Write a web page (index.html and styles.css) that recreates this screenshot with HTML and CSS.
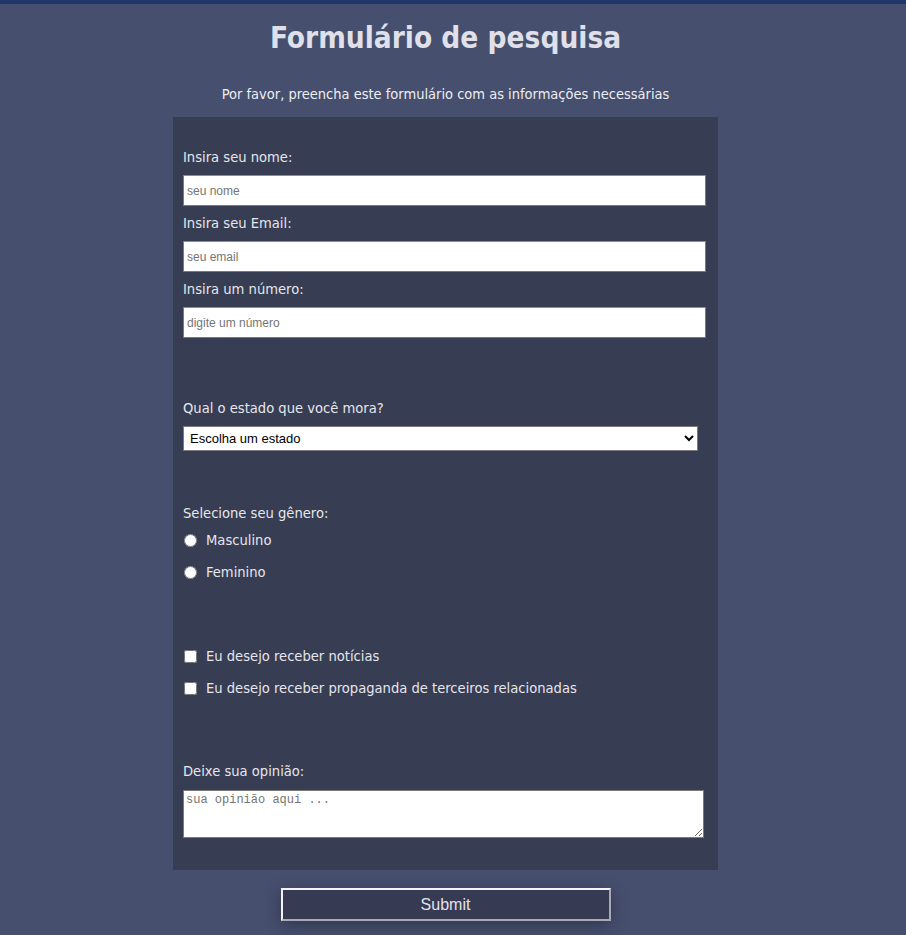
FILE: index.html
```html
<!DOCTYPE html>
<html lang="pt-BR">
<head>
<meta charset="utf-8">
<title>Formulário de pesquisa</title>
<link rel="stylesheet" href="styles.css">
</head>
<body>
<div class="page">
  <h1 class="title">Formulário de pesquisa</h1>
  <p class="subtitle">Por favor, preencha este formulário com as informações necessárias</p>
  <form class="panel">
    <div class="field">
      <label class="label" for="nome">Insira seu nome:</label>
      <input class="text-input" id="nome" type="text" placeholder="seu nome">
    </div>
    <div class="field">
      <label class="label" for="email">Insira seu Email:</label>
      <input class="text-input" id="email" type="email" placeholder="seu email">
    </div>
    <div class="field">
      <label class="label" for="numero">Insira um número:</label>
      <input class="text-input" id="numero" type="number" placeholder="digite um número">
    </div>

    <div class="field section-state">
      <label class="label" for="estado">Qual o estado que você mora?</label>
      <select class="select" id="estado">
        <option>Escolha um estado</option>
      </select>
    </div>

    <div class="field section-gender">
      <span class="label">Selecione seu gênero:</span>
      <div class="choices">
        <label class="choice"><input type="radio" name="genero" class="radio"><span>Masculino</span></label>
        <label class="choice"><input type="radio" name="genero" class="radio"><span>Feminino</span></label>
      </div>
    </div>

    <div class="choices section-checks">
      <label class="choice"><input type="checkbox" class="check"><span>Eu desejo receber notícias</span></label>
      <label class="choice"><input type="checkbox" class="check"><span>Eu desejo receber propaganda de terceiros relacionadas</span></label>
    </div>

    <div class="field section-opinion">
      <label class="label" for="opiniao">Deixe sua opinião:</label>
      <textarea class="textarea" id="opiniao" placeholder="sua opinião aqui ..."></textarea>
    </div>
  </form>
  <div class="actions">
    <button class="submit" type="submit">Submit</button>
  </div>
</div>
</body>
</html>
```

FILE: styles.css
```css
html, body {
  margin: 0;
  padding: 0;
}

body {
  background: #474f6e;
  border-top: 4px solid #1e3768;
  font-family: "DejaVu Sans Condensed", "DejaVu Sans", sans-serif;
  color: #e4e4ea;
  min-height: 931px;
}

.page {
  width: 891px;
  display: flex;
  flex-direction: column;
  align-items: center;
}

.title {
  margin: 16px 0 0;
  font-size: 29.5px;
  line-height: 36px;
  font-weight: bold;
  color: #dfe0ea;
  text-align: center;
}

.subtitle {
  margin: 29px 0 0;
  font-size: 14.5px;
  line-height: 18px;
  color: #eceef2;
  text-align: center;
}

.panel {
  margin-top: 14px;
  width: 545px;
  box-sizing: border-box;
  background: #373d53;
  padding: 31px 10px 32px;
  display: flex;
  flex-direction: column;
}

.field {
  display: flex;
  flex-direction: column;
  align-items: flex-start;
  margin-bottom: 8px;
}

.label {
  display: block;
  font-size: 14.6px;
  line-height: 18px;
  color: #e6e6ec;
  margin-bottom: 9px;
}

.text-input {
  box-sizing: border-box;
  width: 523px;
  height: 31px;
  margin: 0;
  padding: 0 3px;
  border: 1px solid #7a7a7a;
  border-top-color: #8c8c8c;
  background: #fff;
  font-family: "Liberation Sans", Arial, sans-serif;
  font-size: 12px;
  color: #222;
}

.text-input::placeholder {
  color: #757575;
}

.text-input::-webkit-outer-spin-button,
.text-input::-webkit-inner-spin-button {
  -webkit-appearance: none;
  margin: 0;
}

.section-state {
  margin-top: 53px;
}

.select {
  box-sizing: border-box;
  width: 515px;
  height: 25px;
  margin: 0;
  padding: 0 2px;
  border: 1px solid #7a7a7a;
  border-radius: 0;
  background: #fff;
  color: #000;
  font-family: "Liberation Sans", Arial, sans-serif;
  font-size: 13px;
}

.section-gender {
  margin-top: 45px;
  margin-bottom: 0;
}

.section-gender .label {
  margin-bottom: 8px;
}

.choices {
  display: flex;
  flex-direction: column;
  gap: 12px;
}

.choice {
  display: flex;
  align-items: center;
  gap: 9px;
  height: 20px;
  font-size: 14.6px;
  line-height: 18px;
  color: #e6e6ec;
}

.radio,
.check {
  width: 13px;
  height: 13px;
  margin: 0 0 0 1px;
  flex: none;
  accent-color: #ffffff;
}

.section-checks {
  margin-top: 64px;
}

.section-opinion {
  margin-top: 64px;
  margin-bottom: 0;
}

.section-opinion .label {
  margin-bottom: 10px;
}

.textarea {
  box-sizing: border-box;
  width: 521px;
  height: 48px;
  margin: 0;
  padding: 2px 2px;
  border: 1px solid #7a7a7a;
  background: #fff;
  font-family: "Liberation Mono", "DejaVu Sans Mono", monospace;
  font-size: 12px;
  line-height: 14px;
  resize: both;
}

.textarea::placeholder {
  color: #757575;
}

.actions {
  margin-top: 18px;
  display: flex;
  justify-content: center;
}

.submit {
  box-sizing: border-box;
  width: 330px;
  height: 33px;
  margin: 0;
  padding: 0;
  background: #363a52;
  color: #e2e3ea;
  border-style: solid;
  border-width: 2px;
  border-color: #f4f4f6 #a8abb4 #a8abb4 #f4f4f6;
  box-shadow: 0 4px 16px rgba(20, 24, 40, 0.45);
  font-family: "Liberation Sans", Arial, sans-serif;
  font-size: 16px;
  cursor: pointer;
}
```
